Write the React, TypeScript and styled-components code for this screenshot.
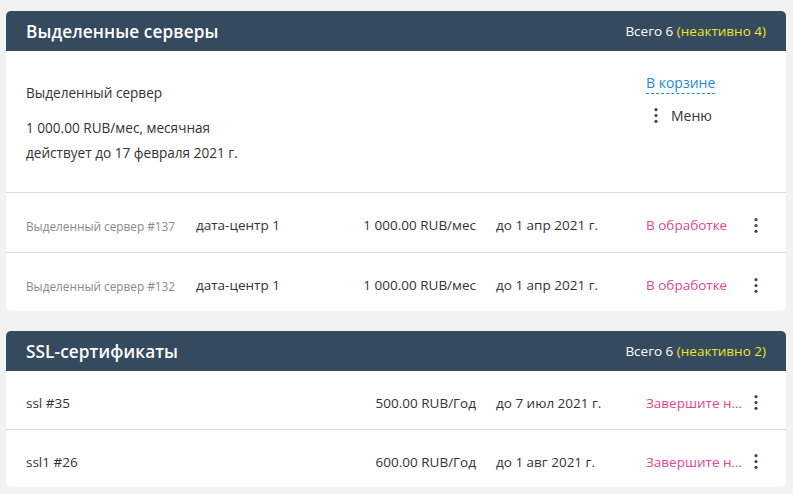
import React from "react";
import styled, { createGlobalStyle } from "styled-components";

const Global = createGlobalStyle`
  html, body { margin: 0; padding: 0; background: #f2f2f2; }
  body { font-family: "Open Sans", "Noto Sans", sans-serif; color: #333; }
  * { box-sizing: border-box; }
`;

const Page = styled.div`
  display: flex;
  flex-direction: column;
  gap: 20px;
  padding: 11px 7px 6px 6px;
  width: 793px;
`;

const Card = styled.section`
  background: #fff;
  border-radius: 5px;
  overflow: hidden;
`;

const Header = styled.header`
  height: 40px;
  background: #354a5e;
  display: flex;
  align-items: center;
  justify-content: space-between;
  padding: 0 20px 0 20px;
`;

const Title = styled.h2`
  margin: 0;
  font-size: 17.2px;
  font-weight: 600;
  color: #fff;
  letter-spacing: 0.1px;
`;

const Count = styled.div`
  font-size: 13.5px;
  color: #fff;
`;

const Inactive = styled.span`
  color: #ece42c;
`;

const Summary = styled.div`
  display: flex;
  justify-content: space-between;
  padding: 19px 20px 0 20px;
  height: 142px;
  border-bottom: 1px solid #ddd;
`;

const SummaryInfo = styled.div`
  display: flex;
  flex-direction: column;
  padding-top: 10px;
  font-size: 13.6px;
  line-height: 25px;
`;

const InfoLine = styled.div<{ $gap?: number }>`
  margin-top: ${(p) => p.$gap ?? 0}px;
`;

const SummaryActions = styled.div`
  width: 120px;
  display: flex;
  flex-direction: column;
  align-items: flex-start;
  gap: 9px;
  font-size: 14px;
  line-height: 25px;
`;

const CartLink = styled.a`
  color: #1f8ad2;
  text-decoration: none;
  line-height: 20px;
  border-bottom: 1px dashed #1f8ad2;
  margin-top: 3px;
  cursor: pointer;
`;

const MenuButton = styled.button`
  display: flex;
  align-items: center;
  gap: 13px;
  border: 0;
  background: none;
  padding: 0 0 0 8px;
  font: inherit;
  font-size: 14px;
  color: #333;
  cursor: pointer;
`;

const Row = styled.div<{ $first?: boolean; $h: number }>`
  display: grid;
  grid-template-columns: 170px 100px 180px 20px 150px 100px 20px;
  align-items: center;
  height: ${(p) => p.$h}px;
  padding: ${(p) => (p.$first ? 5 : 6)}px 20px 0 20px;
  border-top: ${(p) => (p.$first ? "none" : "1px solid #ddd")};
  font-size: 13.5px;
  color: #333;
`;

const Name = styled.div<{ $muted?: boolean }>`
  font-size: ${(p) => (p.$muted ? 11.8 : 13.5)}px;
  color: ${(p) => (p.$muted ? "#8a8a8a" : "#333")};
  white-space: nowrap;
  padding-top: ${(p) => (p.$muted ? 2 : 0)}px;
`;

const Cell = styled.div`
  white-space: nowrap;
`;

const Price = styled.div`
  text-align: right;
  white-space: nowrap;
`;

const Status = styled.div`
  color: #e6468f;
  white-space: nowrap;
  overflow: hidden;
  text-overflow: ellipsis;
`;

const DotsBtn = styled.button`
  border: 0;
  background: none;
  padding: 0;
  width: 20px;
  height: 20px;
  display: flex;
  align-items: center;
  justify-content: center;
  cursor: pointer;
`;

const Dots = () => (
  <svg width="4" height="15" viewBox="0 0 4 15" aria-hidden>
    <circle cx="2" cy="1.7" r="1.6" fill="#354a5e" />
    <circle cx="2" cy="7.5" r="1.6" fill="#354a5e" />
    <circle cx="2" cy="13.3" r="1.6" fill="#354a5e" />
  </svg>
);

type Item = {
  name: string;
  muted?: boolean;
  dc?: string;
  price: string;
  date: string;
  status: string;
};

const servers: Item[] = [
  { name: "Выделенный сервер #137", muted: true, dc: "дата-центр 1", price: "1 000.00 RUB/мес", date: "до 1 апр 2021 г.", status: "В обработке" },
  { name: "Выделенный сервер #132", muted: true, dc: "дата-центр 1", price: "1 000.00 RUB/мес", date: "до 1 апр 2021 г.", status: "В обработке" },
];

const ssl: Item[] = [
  { name: "ssl #35", price: "500.00 RUB/Год", date: "до 7 июл 2021 г.", status: "Завершите настройку" },
  { name: "ssl1 #26", price: "600.00 RUB/Год", date: "до 1 авг 2021 г.", status: "Завершите настройку" },
];

const ItemRow = ({ item, first, h }: { item: Item; first?: boolean; h: number }) => (
  <Row $first={first} $h={h}>
    <Name $muted={item.muted}>{item.name}</Name>
    <Cell>{item.dc ?? ""}</Cell>
    <Price>{item.price}</Price>
    <span />
    <Cell>{item.date}</Cell>
    <Status title={item.status}>{item.status}</Status>
    <DotsBtn aria-label="menu">
      <Dots />
    </DotsBtn>
  </Row>
);

export default function App() {
  return (
    <>
      <Global />
      <Page>
        <Card>
          <Header>
            <Title>Выделенные серверы</Title>
            <Count>
              Всего 6 <Inactive>(неактивно 4)</Inactive>
            </Count>
          </Header>
          <Summary>
            <SummaryInfo>
              <InfoLine>Выделенный сервер</InfoLine>
              <InfoLine $gap={10}>1 000.00 RUB/мес, месячная</InfoLine>
              <InfoLine>действует до 17 февраля 2021 г.</InfoLine>
            </SummaryInfo>
            <SummaryActions>
              <CartLink>В корзине</CartLink>
              <MenuButton>
                <Dots />
                <span>Меню</span>
              </MenuButton>
            </SummaryActions>
          </Summary>
          {servers.map((s, i) => (
            <ItemRow key={s.name} item={s} first={i === 0} h={59} />
          ))}
        </Card>
        <Card>
          <Header>
            <Title>SSL-сертификаты</Title>
            <Count>
              Всего 6 <Inactive>(неактивно 2)</Inactive>
            </Count>
          </Header>
          {ssl.map((s, i) => (
            <ItemRow key={s.name} item={s} first={i === 0} h={58} />
          ))}
        </Card>
      </Page>
    </>
  );
}
